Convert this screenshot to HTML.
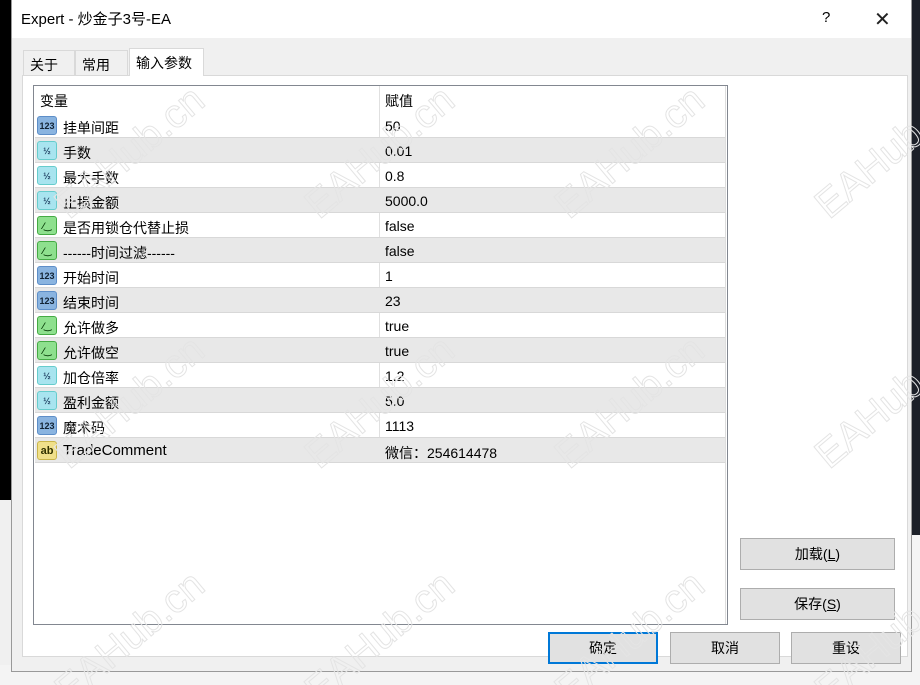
<!DOCTYPE html>
<html><head><meta charset="utf-8"><style>
*{margin:0;padding:0;box-sizing:border-box}
html,body{width:920px;height:685px;overflow:hidden}
body{background:#1a1a1a;font-family:"Liberation Sans","Noto Sans CJK SC",sans-serif;font-size:14px;color:#000;position:relative}
.bgl{position:absolute;left:0;top:0;width:11px;height:685px;background:#000}
.bgb{position:absolute;left:0;top:500px;width:11px;height:185px;background:#f0f0f0}
.bgr{position:absolute;right:0;top:0;width:9px;height:685px;background:#1c2028}
.bgbr{position:absolute;right:0;top:535px;width:9px;height:150px;background:#f4f4f4}
.bot{position:absolute;left:0;top:665px;width:920px;height:20px;background:#f4f4f4}
.dlg{position:absolute;left:11px;top:0;width:901px;height:672px;background:#f0f0f0;border:1px solid #999;border-top:none}
.title{position:absolute;left:0;top:0;width:100%;height:38px;background:#fff;font-size:15px}
.title span{position:absolute;left:9px;top:8px}
.q{position:absolute;left:810px;top:9px;font-size:15px}
.x{position:absolute;left:862px;top:7px;font-size:20px;font-weight:100;color:#222}
.tab{position:absolute;top:50px;height:26px;border:1px solid #d9d9d9;border-bottom:none;background:#f0f0f0;padding:4px 6px;font-size:14px}
.tab.a{top:48px;height:28px;background:#fff;z-index:2}
.pane{position:absolute;left:10px;top:75px;width:886px;height:582px;background:#fff;border:1px solid #d9d9d9}
.list{position:absolute;left:21px;top:85px;width:695px;height:540px;border:1px solid #828790;background:#fff}
.hdr{position:absolute;left:0;top:0;width:100%;height:27px}
.hdr span{position:absolute;top:5px}
.vl{position:absolute;left:345px;top:0;width:1px;height:377px;background:#e0e0e0}
.vr{position:absolute;left:691px;top:0;width:1px;height:100%;background:#ddd}
.row{position:absolute;left:1px;width:690px;height:25px;border-bottom:1px solid #d8d8d8}
.row.g{background:#e8e8e8}
.row .n{position:absolute;left:28px;top:5px}
.row .v{position:absolute;left:350px;top:5px}
.ic{position:absolute;left:2px;top:3px;width:20px;height:19px;border-radius:3px;font-size:9px;font-weight:bold;text-align:center;line-height:19px}
.i1{background:#8ab4e0;border:1px solid #5d8ec8;color:#123}
.i2{background:#a8e4ef;border:1px solid #6cc;color:#246}
.i3{background:#8ee08e;border:1px solid #4a4;color:#030}
.i4{background:#f0e08a;border:1px solid #c9b54a;color:#330;font-size:11px}
.btn{position:absolute;background:#e1e1e1;border:1px solid #adadad;text-align:center;line-height:30px;font-size:14px}
.wm{position:absolute;font-family:"Liberation Sans",sans-serif;font-size:40px;color:transparent;-webkit-text-stroke:1px #e4e4e4;transform:rotate(-40deg);white-space:nowrap;z-index:5;pointer-events:none}
</style></head><body>
<div class="bgl"></div><div class="bgb"></div><div class="bgr"></div><div class="bgbr"></div><div class="bot"></div>
<div class="dlg">
<div class="title"><span>Expert - 炒金子3号-EA</span><div class="q">?</div><div class="x">✕</div></div>
<div class="tab" style="left:11px;width:52px">关于</div>
<div class="tab" style="left:63px;width:53px">常用</div>
<div class="tab a" style="left:117px;width:75px">输入参数</div>
<div class="pane"></div>
<div class="list">
<div class="hdr"><span style="left:6px">变量</span><span style="left:351px">赋值</span></div>
<div class="vl"></div><div class="vr"></div>
<div class="row" style="top:27px"><div class="ic i1">123</div><span class="n">挂单间距</span><span class="v">50</span></div>
<div class="row g" style="top:52px"><div class="ic i2">½</div><span class="n">手数</span><span class="v">0.01</span></div>
<div class="row" style="top:77px"><div class="ic i2">½</div><span class="n">最大手数</span><span class="v">0.8</span></div>
<div class="row g" style="top:102px"><div class="ic i2">½</div><span class="n">止损金额</span><span class="v">5000.0</span></div>
<div class="row" style="top:127px"><div class="ic i3">⁄‿</div><span class="n">是否用锁仓代替止损</span><span class="v">false</span></div>
<div class="row g" style="top:152px"><div class="ic i3">⁄‿</div><span class="n">------时间过滤------</span><span class="v">false</span></div>
<div class="row" style="top:177px"><div class="ic i1">123</div><span class="n">开始时间</span><span class="v">1</span></div>
<div class="row g" style="top:202px"><div class="ic i1">123</div><span class="n">结束时间</span><span class="v">23</span></div>
<div class="row" style="top:227px"><div class="ic i3">⁄‿</div><span class="n">允许做多</span><span class="v">true</span></div>
<div class="row g" style="top:252px"><div class="ic i3">⁄‿</div><span class="n">允许做空</span><span class="v">true</span></div>
<div class="row" style="top:277px"><div class="ic i2">½</div><span class="n">加仓倍率</span><span class="v">1.2</span></div>
<div class="row g" style="top:302px"><div class="ic i2">½</div><span class="n">盈利金额</span><span class="v">5.0</span></div>
<div class="row" style="top:327px"><div class="ic i1">123</div><span class="n">魔术码</span><span class="v">1113</span></div>
<div class="row g" style="top:352px"><div class="ic i4">ab</div><span class="n" style="font-size:15px;top:4px">TradeComment</span><span class="v">微信：254614478</span></div>
</div>
<div class="btn" style="left:728px;top:538px;width:155px;height:32px">加载(<u>L</u>)</div>
<div class="btn" style="left:728px;top:588px;width:155px;height:32px">保存(<u>S</u>)</div>
<div class="btn" style="left:536px;top:632px;width:110px;height:32px;border:2px solid #0078d7;line-height:28px">确定</div>
<div class="btn" style="left:658px;top:632px;width:110px;height:32px">取消</div>
<div class="btn" style="left:779px;top:632px;width:110px;height:32px">重设</div>
</div>
<div class="wm" style="left:40px;top:130px">EAHub.cn</div>
<div class="wm" style="left:290px;top:130px">EAHub.cn</div>
<div class="wm" style="left:540px;top:130px">EAHub.cn</div>
<div class="wm" style="left:800px;top:130px">EAHub.cn</div>
<div class="wm" style="left:40px;top:380px">EAHub.cn</div>
<div class="wm" style="left:290px;top:380px">EAHub.cn</div>
<div class="wm" style="left:540px;top:380px">EAHub.cn</div>
<div class="wm" style="left:800px;top:380px">EAHub.cn</div>
<div class="wm" style="left:40px;top:615px">EAHub.cn</div>
<div class="wm" style="left:290px;top:615px">EAHub.cn</div>
<div class="wm" style="left:540px;top:615px">EAHub.cn</div>
<div class="wm" style="left:800px;top:615px">EAHub.cn</div>
</body></html>
